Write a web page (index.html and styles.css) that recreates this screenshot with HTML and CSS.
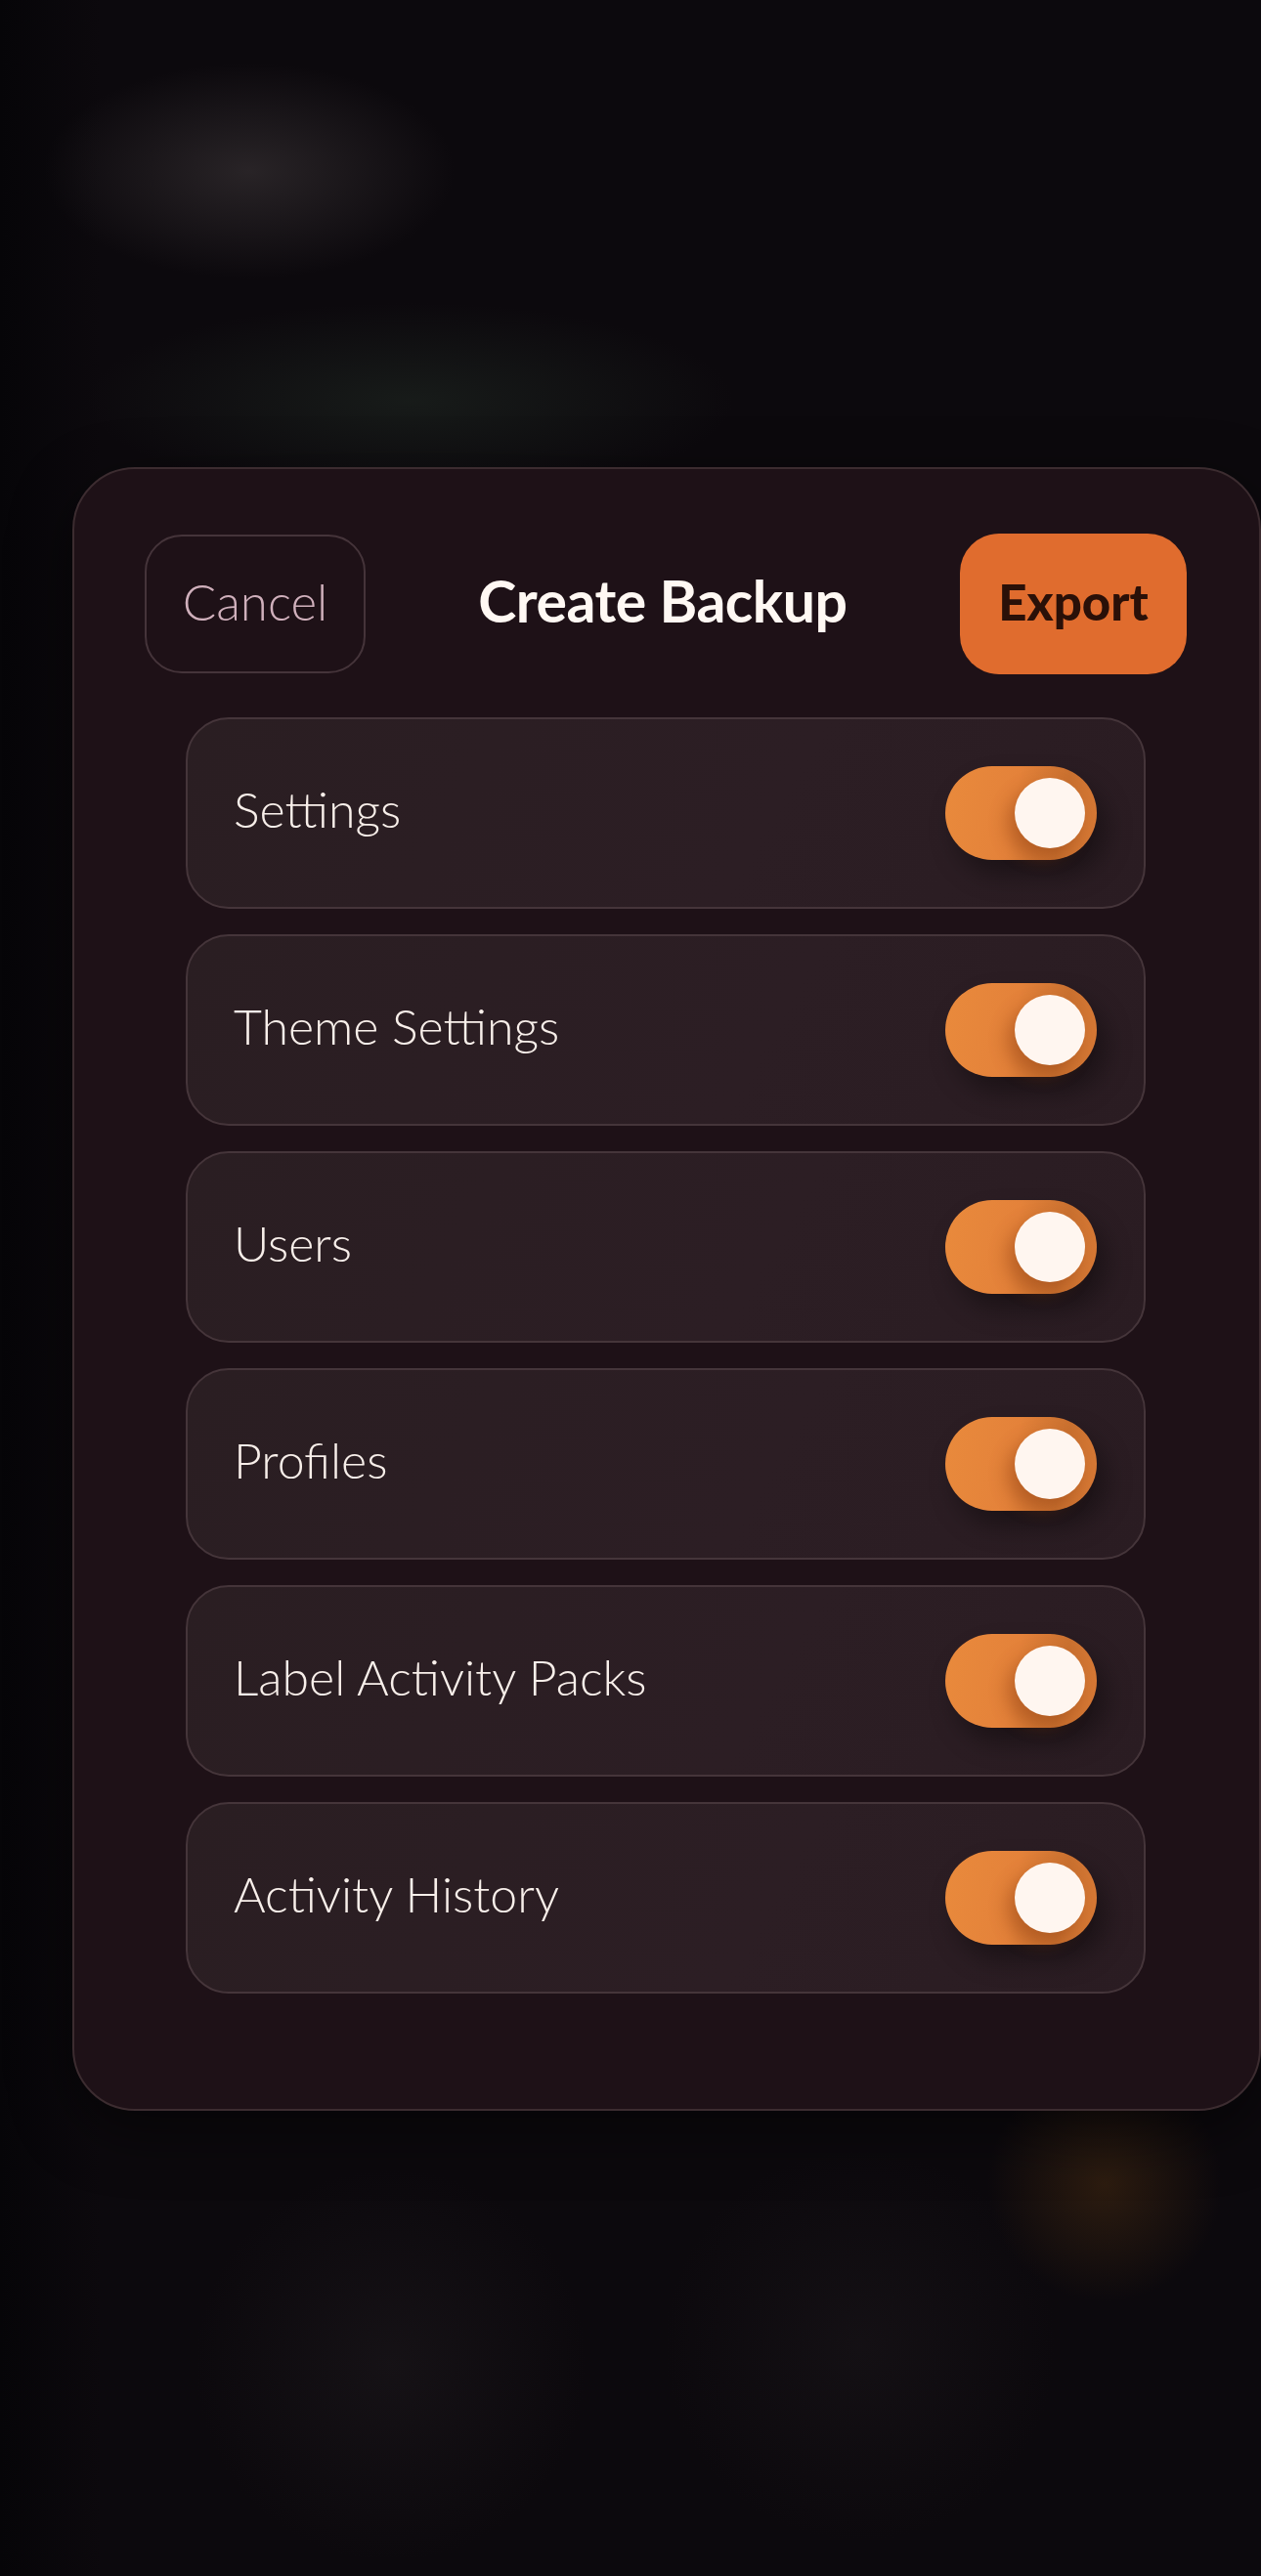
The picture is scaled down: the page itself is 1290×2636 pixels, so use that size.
FILE: index.html
```html
<!DOCTYPE html>
<html lang="en">
<head>
    <meta charset="UTF-8">
    <title>Create Backup</title>
    <link rel="stylesheet" href="styles.css">
</head>
<body>
    <div class="sheet">
        <div class="sheet-head">
            <button class="btn-cancel">Cancel</button>
            <div class="sheet-title">Create Backup</div>
            <button class="btn-export">Export</button>
        </div>
        <ul class="options">
            <li><span>Settings</span><i class="toggle on"></i></li>
            <li><span>Theme Settings</span><i class="toggle on"></i></li>
            <li><span>Users</span><i class="toggle on"></i></li>
            <li><span>Profiles</span><i class="toggle on"></i></li>
            <li><span>Label Activity Packs</span><i class="toggle on"></i></li>
            <li><span>Activity History</span><i class="toggle on"></i></li>
        </ul>
    </div>
</body>
</html>
```

FILE: styles.css
```css
* {
    box-sizing: border-box;
}

body, html {
    margin: 0;
    padding: 0;
    font-family: "Lato", "Noto Sans", sans-serif;
}

body {
    min-height: 2636px;
    background:
        radial-gradient(ellipse 210px 110px at 255px 175px, rgba(42, 37, 40, 0.95), rgba(42, 37, 40, 0) 100%),
        radial-gradient(ellipse 330px 100px at 420px 410px, rgba(24, 28, 26, 0.95), rgba(24, 28, 26, 0) 100%),
        radial-gradient(circle 120px at 1130px 2235px, rgba(48, 30, 16, 0.9), rgba(48, 30, 16, 0) 100%),
        radial-gradient(ellipse 200px 200px at 400px 2420px, rgba(24, 20, 24, 0.8), rgba(24, 20, 24, 0) 100%),
        radial-gradient(ellipse 200px 200px at 880px 2400px, rgba(22, 18, 22, 0.8), rgba(22, 18, 22, 0) 100%),
        linear-gradient(90deg, #060508 0%, #0c090d 8%, #0c090d 100%);
    padding-top: 478px;
}

.sheet {
    margin-left: 74px;
    width: 1216px;
    height: 1682px;
    background: #1e1117;
    border: 2px solid #3c2c30;
    border-radius: 64px;
    padding: 66px 74px 0 72px;
    box-shadow: 0 20px 60px rgba(0, 0, 0, 0.5);
}

.sheet-head {
    display: flex;
    align-items: center;
    justify-content: space-between;
    height: 144px;
}

.btn-cancel {
    width: 226px;
    height: 142px;
    background: transparent;
    border: 2px solid #45343a;
    border-radius: 38px;
    color: #d0b0bc;
    font-family: inherit;
    font-size: 51px;
    font-weight: 300;
    padding: 0 0 6px 0;
}

.sheet-title {
    color: #fff8f3;
    font-size: 59px;
    font-weight: 700;
    letter-spacing: -0.5px;
    padding-bottom: 8px;
}

.btn-export {
    width: 232px;
    height: 144px;
    background: #e06c2e;
    border: none;
    border-radius: 40px;
    color: #2a1008;
    font-family: inherit;
    font-size: 51px;
    font-weight: 900;
    padding: 0 0 6px 0;
}

.options {
    list-style: none;
    margin: 44px 0 0 0;
    padding: 0 42px;
    display: flex;
    flex-direction: column;
    gap: 26px;
}

.options li {
    height: 196px;
    display: flex;
    align-items: center;
    justify-content: space-between;
    padding: 0 48px 0 47px;
    background: linear-gradient(120deg, #2a1e22 0%, #2c1e24 60%, #2a1c22 100%);
    border: 2px solid #45353a;
    border-radius: 44px;
}

.options li span {
    color: #f8efea;
    font-size: 50px;
    font-weight: 300;
    padding-bottom: 8px;
}

.toggle {
    position: relative;
    width: 155px;
    height: 96px;
    border-radius: 48px;
    background: linear-gradient(100deg, #e98a3c 0%, #e4823a 45%, #c9702f 75%, #d97a36 100%);
    box-shadow: 10px 16px 26px rgba(0, 0, 0, 0.35);
}

.toggle::after {
    content: "";
    position: absolute;
    top: 12px;
    right: 12px;
    width: 72px;
    height: 72px;
    border-radius: 50%;
    background: #fff6f0;
    box-shadow: -8px 10px 18px rgba(140, 60, 15, 0.45);
}
```
